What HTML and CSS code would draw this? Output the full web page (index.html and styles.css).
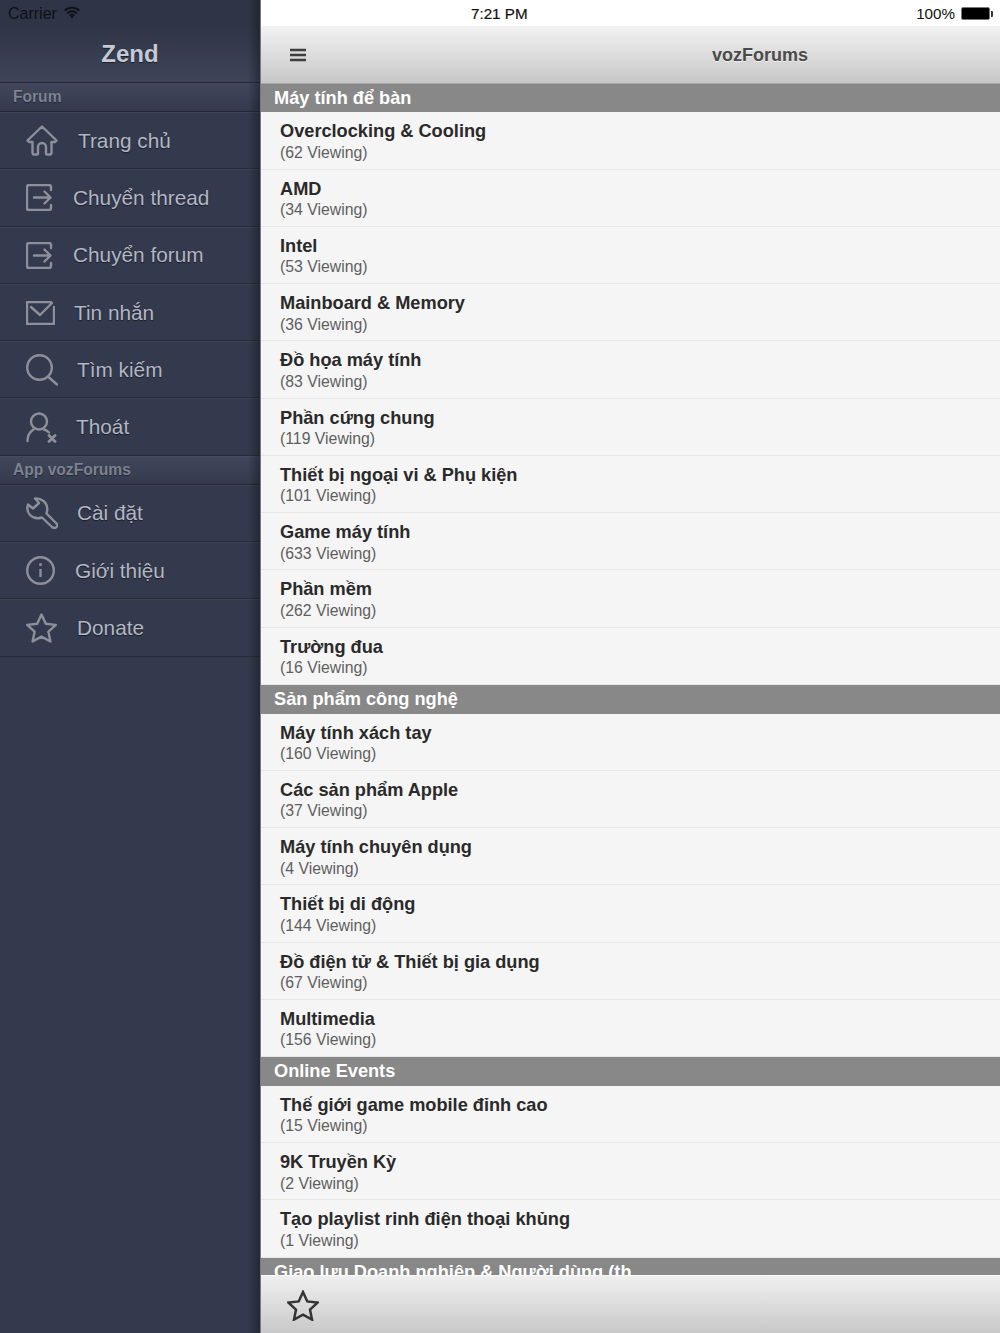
FILE: index.html
```html
<!DOCTYPE html>
<html lang="vi">
<head>
  <meta charset="UTF-8">
  <meta name="viewport" content="width=device-width, initial-scale=1.0">
  <title>vozForums</title>
  <link rel="stylesheet" href="styles.css">
</head>
<body>
  <div class="container">
    <aside class="sidebar">
      <div class="carrier">
        <span>Carrier</span>
        <svg class="wifi" width="16" height="13" viewBox="0 0 16 13">
          <path d="M.8 4.500a10.400 10.400 0 0 1 14.400 0M3.200 7.200a6.900 6.900 0 0 1 9.600 0M5.600 9.700a3.400 3.400 0 0 1 4.800 0" fill="none" stroke="#0e1016" stroke-width="1.900"/>
          <path d="m6.400 10.900 1.600 1.700 1.600-1.700a2 2 0 0 0-3.200 0z" fill="#0e1016"/>
        </svg>
      </div>
      <div class="side-title">Zend</div>

      <div class="side-section">Forum</div>
      <a class="side-item">
        <svg width="33" height="32" viewBox="0 0 33 32"><path d="M6.500 17v11a1.500 1.500 0 0 0 1.500 1.500h3a1 1 0 0 0 1-1V22a4 4 0 0 1 8 0v6.500a1 1 0 0 0 1 1h3a1.500 1.500 0 0 0 1.500-1.500V17H29l1.500-1.500L16 1.500 1.500 15.500 3 17z"/></svg>
        <span>Trang chủ</span>
      </a>
      <a class="side-item">
        <svg width="28" height="27" viewBox="0 0 28 27"><path d="M25 6V3q0-2-2-2H3Q1 1 1 3v21q0 2 2 2h20q2 0 2-2v-3M8 13.500h16M18.500 7.500l6 6-6 6"/></svg>
        <span>Chuyển thread</span>
      </a>
      <a class="side-item">
        <svg width="28" height="27" viewBox="0 0 28 27"><path d="M25 6V3q0-2-2-2H3Q1 1 1 3v21q0 2 2 2h20q2 0 2-2v-3M8 13.500h16M18.500 7.500l6 6-6 6"/></svg>
        <span>Chuyển forum</span>
      </a>
      <a class="side-item">
        <svg width="29" height="24" viewBox="0 0 29 24"><path d="M28 6v17H1V1h24M5 6l9 8L26 2"/></svg>
        <span>Tin nhắn</span>
      </a>
      <a class="side-item">
        <svg width="32" height="32" viewBox="0 0 32 32"><circle cx="13.500" cy="13.500" r="12.300"/><path d="m22.500 23 8.500 7.500"/></svg>
        <span>Tìm kiếm</span>
      </a>
      <a class="side-item">
        <svg width="31" height="31" viewBox="0 0 31 31"><circle cx="13" cy="9.500" r="8"/><path d="M1.500 29c0-5 2-9 6-11.500M18 17.500c2 .6 3.500 1.500 5 3"/><path class="thick" d="m23 23.500 6 6M29 23.500l-6 6"/></svg>
        <span>Thoát</span>
      </a>

      <div class="side-section">App vozForums</div>
      <a class="side-item">
        <svg width="32" height="32" viewBox="0 0 32 32"><path d="M9 1.500 13 6l-6 5.500-5-4Q0 14 4 18q5 5 12 2.500l10 9.500q2.500 2 4.500 0t-.5-4l-9.500-9.500Q23 9 17.500 4 13.500 1 9 1.500z"/></svg>
        <span>Cài đặt</span>
      </a>
      <a class="side-item">
        <svg width="30" height="29" viewBox="0 0 30 29"><circle cx="14.500" cy="14.500" r="13.300"/><path class="stem" d="M14.500 13v8"/><circle class="dot" cx="14.500" cy="8.500" r="1.500"/></svg>
        <span>Giới thiệu</span>
      </a>
      <a class="side-item">
        <svg width="32" height="30" viewBox="0 0 32 30"><path d="m15.500 1.500 4.300 9.200 10 1.200-7.400 6.800 2 9.800-8.900-4.900-8.900 4.900 2-9.800-7.400-6.800 10-1.200z"/></svg>
        <span>Donate</span>
      </a>
    </aside>

    <main class="main">
      <div class="status">
        <span class="clock">7:21 PM</span>
        <div class="battery-wrap">
          <span>100%</span>
          <span class="battery"></span>
        </div>
      </div>
      <header class="navbar">
        <svg class="menu" width="16" height="14" viewBox="0 0 16 14"><path d="M0 2h16M0 7h16M0 12h16"/></svg>
        <div class="nav-title">vozForums</div>
      </header>

      <div class="list">
        <div class="section">Máy tính để bàn</div>
        <div class="row"><b>Overclocking &amp; Cooling</b><small>(62 Viewing)</small></div>
        <div class="row"><b>AMD</b><small>(34 Viewing)</small></div>
        <div class="row"><b>Intel</b><small>(53 Viewing)</small></div>
        <div class="row"><b>Mainboard &amp; Memory</b><small>(36 Viewing)</small></div>
        <div class="row"><b>Đồ họa máy tính</b><small>(83 Viewing)</small></div>
        <div class="row"><b>Phần cứng chung</b><small>(119 Viewing)</small></div>
        <div class="row"><b>Thiết bị ngoại vi &amp; Phụ kiện</b><small>(101 Viewing)</small></div>
        <div class="row"><b>Game máy tính</b><small>(633 Viewing)</small></div>
        <div class="row"><b>Phần mềm</b><small>(262 Viewing)</small></div>
        <div class="row"><b>Trường đua</b><small>(16 Viewing)</small></div>

        <div class="section">Sản phẩm công nghệ</div>
        <div class="row"><b>Máy tính xách tay</b><small>(160 Viewing)</small></div>
        <div class="row"><b>Các sản phẩm Apple</b><small>(37 Viewing)</small></div>
        <div class="row"><b>Máy tính chuyên dụng</b><small>(4 Viewing)</small></div>
        <div class="row"><b>Thiết bị di động</b><small>(144 Viewing)</small></div>
        <div class="row"><b>Đồ điện tử &amp; Thiết bị gia dụng</b><small>(67 Viewing)</small></div>
        <div class="row"><b>Multimedia</b><small>(156 Viewing)</small></div>

        <div class="section">Online Events</div>
        <div class="row"><b>Thế giới game mobile đỉnh cao</b><small>(15 Viewing)</small></div>
        <div class="row"><b>9K Truyền Kỳ</b><small>(2 Viewing)</small></div>
        <div class="row"><b>Tạo playlist rinh điện thoại khủng</b><small>(1 Viewing)</small></div>

        <div class="section">Giao lưu Doanh nghiệp &amp; Người dùng (th</div>
      </div>

      <footer class="toolbar">
        <svg width="32" height="31" viewBox="0 0 32 31"><path d="m16 2 4.300 9.400 10.200 1.200-7.500 7 2 10-9-5-9 5 2-10-7.500-7 10.200-1.200z"/></svg>
      </footer>
    </main>
  </div>
</body>
</html>
```

FILE: styles.css
```css
* {
  margin: 0;
  padding: 0;
  box-sizing: border-box;
}

body {
  font-family: 'Liberation Sans', Arial, sans-serif;
  background: #f5f5f5;
  overflow: hidden;
}

.container {
  width: 1000px;
  height: 1333px;
  display: flex;
}

/* left menu */
.sidebar {
  width: 261px;
  flex-shrink: 0;
  position: relative;
  background: #333a4d;
  border-right: 1px solid #777b86;
}

.sidebar::after {
  content: '';
  position: absolute;
  top: 0;
  right: 0;
  bottom: 0;
  width: 12px;
  background: linear-gradient(90deg, rgba(20, 23, 32, 0), rgba(20, 23, 32, 0.5));
}

.carrier {
  height: 26px;
  padding: 2px 0 0 8px;
  display: flex;
  align-items: center;
  gap: 7px;
  font-size: 16px;
  color: #0e1016;
  background: #2f3546;
}

.wifi {
  margin-top: -3px;
}

.side-title {
  height: 57px;
  line-height: 56px;
  text-align: center;
  font-size: 24px;
  font-weight: bold;
  color: #c6c9d6;
  text-shadow: 0 1px 1px rgba(0, 0, 0, 0.5);
  background: linear-gradient(180deg, #2f3546 0%, #3e4559 100%);
  border-bottom: 1px solid #232733;
}

.side-section {
  height: 29px;
  line-height: 26.500px;
  padding-left: 13px;
  font-size: 15.600px;
  font-weight: bold;
  color: #7d8291;
  text-shadow: 0 1px 1px rgba(0, 0, 0, 0.4);
  background: linear-gradient(180deg, #40475b 0%, #343b4e 100%);
  border-top: 1px solid #454c60;
  border-bottom: 1px solid #232733;
}

.side-item {
  height: 57.300px;
  padding-left: 26px;
  display: flex;
  align-items: center;
  gap: 19px;
  font-size: 20.800px;
  color: #b3b6c3;
  text-shadow: 0 1px 1px rgba(0, 0, 0, 0.5);
  border-top: 1px solid #3e4457;
  border-bottom: 1px solid #262b38;
}

.side-item svg {
  flex-shrink: 0;
  fill: none;
  stroke: #8d909b;
  stroke-width: 2.400;
  stroke-linejoin: round;
  stroke-linecap: round;
}

.side-item svg .thick {
  stroke-width: 2.800;
}

.side-item svg .stem {
  stroke-linecap: butt;
}

.side-item svg .dot {
  fill: #8d909b;
  stroke: none;
}

/* right content */
.main {
  flex: 1;
  min-width: 0;
  display: flex;
  flex-direction: column;
}

.status {
  height: 26px;
  flex-shrink: 0;
  position: relative;
  background: #fff;
  display: flex;
  align-items: center;
  justify-content: flex-end;
  padding: 1px 10px 0 0;
  font-size: 15.200px;
  color: #111;
}

.clock {
  position: absolute;
  left: 210px;
  top: 5px;
  font-size: 15.200px;
  -webkit-text-stroke: 0.200px #111;
}

.battery-wrap {
  display: flex;
  align-items: center;
  gap: 6px;
}

.battery {
  position: relative;
  width: 29px;
  height: 13px;
  background: #000;
  border: 1px solid #777;
  border-radius: 2px;
}

.battery::after {
  content: '';
  position: absolute;
  right: -3.500px;
  top: 2.500px;
  width: 2px;
  height: 6px;
  background: #333;
  border-radius: 0 1px 1px 0;
}

.navbar {
  height: 57.500px;
  flex-shrink: 0;
  position: relative;
  display: flex;
  align-items: center;
  justify-content: center;
  padding: 2px 0 0 259px;
  background: linear-gradient(180deg, #f2f2f2 0%, #c7c7c7 100%);
  border-bottom: 1px solid #a8a8a8;
}

.menu {
  position: absolute;
  left: 29px;
  top: 22px;
  stroke: #3f3f3f;
  stroke-width: 2.500;
}

.nav-title {
  font-size: 18px;
  font-weight: bold;
  color: #4a4a4a;
  text-shadow: 0 1px 0 rgba(255, 255, 255, 0.6);
}

.list {
  flex: 1;
  min-height: 0;
  overflow: hidden;
}

.section {
  height: 28.750px;
  line-height: 29px;
  padding-left: 13px;
  background: #888;
  color: #fff;
  font-size: 18.200px;
  font-weight: bold;
}

.row {
  height: 57.250px;
  padding: 8px 0 0 19px;
  background: #f5f5f5;
  border-bottom: 1px solid #e6e6e6;
}

.row b {
  display: block;
  font-size: 18.200px;
  line-height: 22px;
  color: #2a2a2a;
}

.row small {
  display: block;
  margin-top: 0.500px;
  font-size: 15.800px;
  line-height: 20px;
  color: #5f5f5f;
}

.toolbar {
  height: 58px;
  flex-shrink: 0;
  padding: 14px 0 0 26px;
  background: linear-gradient(180deg, #efefef 0%, #c9c9c9 100%);
  border-top: 1px solid #fafafa;
}

.toolbar svg {
  fill: none;
  stroke: #333;
  stroke-width: 2.500;
  display: block;
}
```
